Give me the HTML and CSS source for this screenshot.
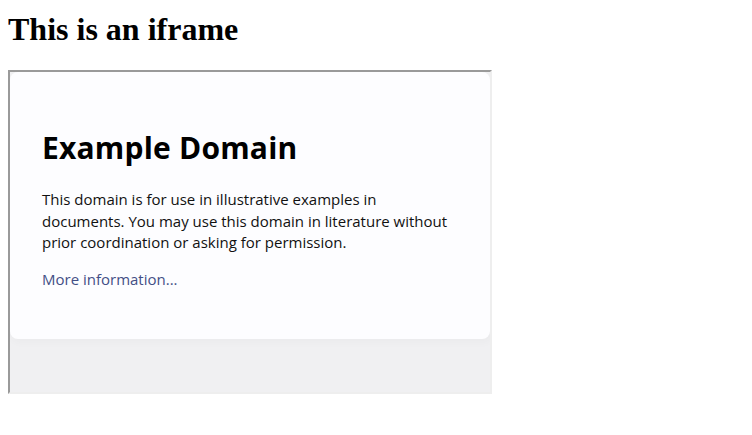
FILE: index.html
```html
<!DOCTYPE html>
<html>
<head>
<meta charset="utf-8">
<title>iframe</title>
<link rel="stylesheet" href="styles.css">
</head>
<body>
<h1 class="title">This is an iframe</h1>
<div class="frame">
  <div class="frame-page">
    <div class="card">
      <h1 class="card-title">Example Domain</h1>
      <p class="card-text">This domain is for use in illustrative examples in documents. You may use this domain in literature without prior coordination or asking for permission.</p>
      <p class="card-text"><a class="card-link" href="#">More information...</a></p>
    </div>
  </div>
</div>
</body>
</html>
```
FILE: styles.css
```css
html, body {
  background: #ffffff;
}
body {
  margin: 8px;
  font-family: "Liberation Serif", "Times New Roman", serif;
}
.title {
  font-family: "Liberation Serif", "Times New Roman", serif;
  font-size: 32px;
  font-weight: bold;
  line-height: 36.8px;
  margin: 3px 0 22px 0;
  color: #000;
}
.frame {
  width: 480px;
  height: 320px;
  border-style: solid;
  border-width: 2px;
  border-color: #9a9a9a #eeeeee #eeeeee #9a9a9a;
  overflow: hidden;
}
.frame-page {
  height: 100%;
  background: #f0f0f2;
  font-family: "Open Sans", "Noto Sans", sans-serif;
}
.card {
  padding: 32px;
  background: #fdfdff;
  border-radius: 8px;
  box-shadow: 2px 3px 7px 2px rgba(0, 0, 0, 0.02);
}
.card-title {
  font-size: 30px;
  font-weight: bold;
  line-height: 42.5px;
  letter-spacing: 0.2px;
  margin: 23.5px 0 19.4px 0;
  color: #000;
}
.card-text {
  font-size: 15px;
  line-height: 21.33px;
  margin: 16px 0;
  color: #111;
}
.card-link {
  color: #434f86;
  text-decoration: none;
}
```
